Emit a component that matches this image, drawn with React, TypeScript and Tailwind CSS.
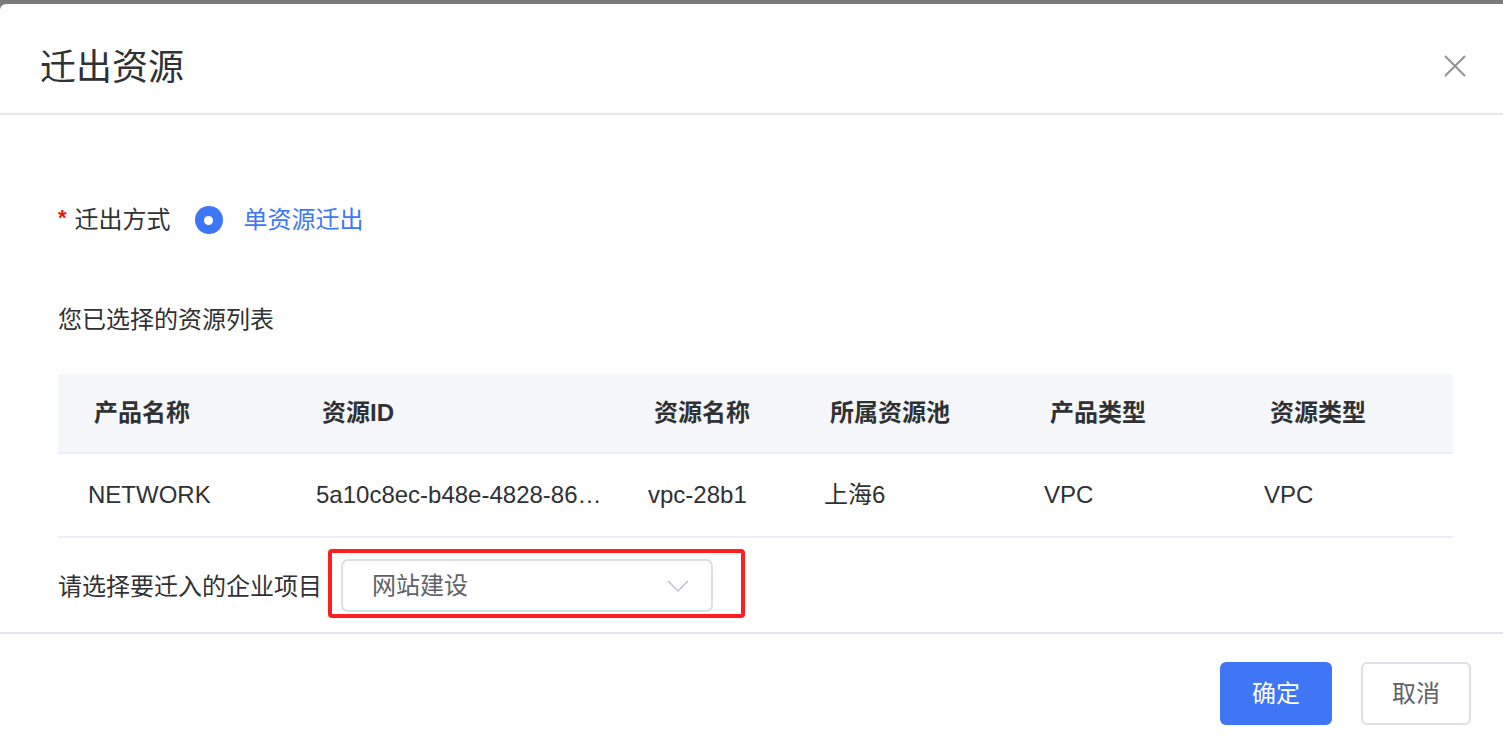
import React from "react";

const COLUMNS = [
  { title: "产品名称", value: "NETWORK", width: "w-[228px]" },
  { title: "资源ID", value: "5a10c8ec-b48e-4828-86…", width: "w-[332px]" },
  { title: "资源名称", value: "vpc-28b1", width: "w-[176px]" },
  { title: "所属资源池", value: "上海6", width: "w-[220px]" },
  { title: "产品类型", value: "VPC", width: "w-[220px]" },
  { title: "资源类型", value: "VPC", width: "flex-1" },
];

export default function App() {
  return (
    <div
      className="w-[1503px] h-[745px] overflow-hidden bg-[#7b7b7b] pt-[4px] text-[#303133]"
      style={{ fontFamily: '"Liberation Sans", "Noto Sans CJK SC", sans-serif' }}
    >
      <div className="bg-white rounded-tl-[6px] h-full flex flex-col">
        {/* header */}
        <div className="h-[111px] flex items-center justify-between pl-[40px] pr-[36px] pt-[18px] border-b-2 border-[#e4e7ed]">
          <h1 className="text-[36px] leading-none text-[#303133]">迁出资源</h1>
          <button className="size-[24px] flex items-center justify-center text-[#909399] -mt-[4px]">
            <svg width="22" height="22" viewBox="0 0 22 22" fill="none" stroke="currentColor" strokeWidth="2">
              <path d="M1 1L21 21M21 1L1 21" />
            </svg>
          </button>
        </div>

        {/* body */}
        <div className="pt-[81px] pb-[14px] px-[58px] border-b-2 border-[#e4e7ed]">
          <div className="flex items-center h-[48px] text-[24px]">
            <span className="text-[#f01010] text-[22px] font-bold mr-[8px] -mt-[6px]">*</span>
            <span>迁出方式</span>
            <span className="ml-[24px] size-[28px] rounded-full bg-[#3e77f6] flex items-center justify-center">
              <span className="size-[9px] rounded-full bg-white" />
            </span>
            <span className="ml-[21px] text-[#3e77f6]">单资源迁出</span>
          </div>

          <div className="mt-[60px] text-[24px] leading-[32px]">您已选择的资源列表</div>

          <div className="mt-[38px] w-[1395px]">
            <div className="flex h-[80px] bg-[#f5f7fa] border-b-2 border-[#ebeef5] items-center">
              {COLUMNS.map((c) => (
                <div key={c.title} className={`${c.width} pl-[36px] text-[24px] font-bold text-[#303133]`}>
                  {c.title}
                </div>
              ))}
            </div>
            <div className="flex h-[84px] border-b-2 border-[#ebeef5] items-center">
              {COLUMNS.map((c) => (
                <div key={c.title} className={`${c.width} pl-[30px] text-[24px] text-[#303133] whitespace-nowrap`}>
                  {c.value}
                </div>
              ))}
            </div>
          </div>

          <div className="mt-[11px] flex items-center">
            <span className="text-[24px] text-[#303133] mt-[6px]">请选择要迁入的企业项目</span>
            <div className="ml-[6px] border-4 border-[#ff1f1f] rounded-[4px] pl-[9px] pr-[28px] pt-[6px] pb-[2px]">
              <div className="w-[372px] h-[53px] border-2 border-[#dcdfe6] rounded-[7px] flex items-center justify-between pl-[29px] pr-[22px]">
                <span className="text-[24px] text-[#606266]">网站建设</span>
                <svg width="22" height="12" viewBox="0 0 22 12" fill="none" stroke="#c0c4cc" strokeWidth="1.6">
                  <path d="M1 1L11 11L21 1" />
                </svg>
              </div>
            </div>
          </div>
        </div>

        {/* footer */}
        <div className="flex justify-end gap-[29px] pt-[28px] pr-[32px]">
          <button className="w-[112px] h-[63px] rounded-[6px] bg-[#3e76f5] text-white text-[24px]">确定</button>
          <button className="w-[110px] h-[63px] rounded-[6px] border-2 border-[#dcdfe6] bg-white text-[#606266] text-[24px]">
            取消
          </button>
        </div>
      </div>
    </div>
  );
}
